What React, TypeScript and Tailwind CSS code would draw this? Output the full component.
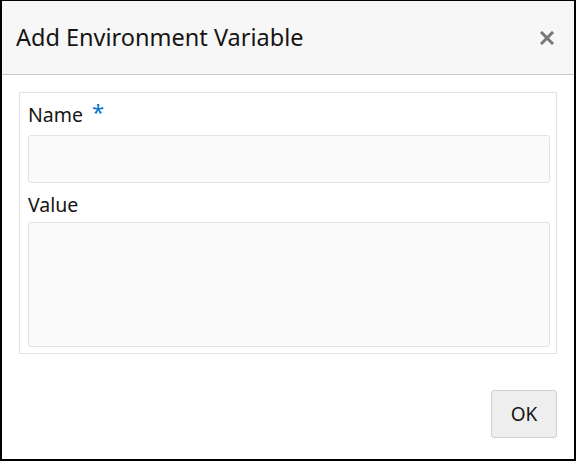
import React, { useState } from 'react';

const App = () => {
  const [name, setName] = useState("");
  const [value, setValue] = useState("");

  return (
    <div
      className="w-[576px] h-[461px] flex flex-col bg-white border border-black border-l-2 border-r-2 border-b-2 overflow-hidden"
      style={{ fontFamily: '"Noto Sans", "Open Sans", sans-serif' }}
    >
      {/* header */}
      <div className="h-[74px] shrink-0 flex items-center justify-between bg-[#f7f7f7] border-b border-[#c8c8c8] pl-[14px] pr-[20px]">
        <h2 className="text-[23.5px] text-[#161513] font-normal leading-none">Add Environment Variable</h2>
        <button className="text-[#777777] hover:text-[#555]" aria-label="Close">
          <svg width="14" height="14" viewBox="0 0 14 14">
            <path d="M2 2 L12 12 M12 2 L2 12" stroke="currentColor" strokeWidth="3" strokeLinecap="square" />
          </svg>
        </button>
      </div>

      {/* form */}
      <div className="flex-1 flex flex-col pt-[17px] pl-[17px] pr-[17px]">
        <div className="border border-[#e3e3e3] pl-[8px] pr-[6px] pt-[8px] pb-[6px]">
          <label htmlFor="env-name" className="flex items-start h-[34px] text-[19.5px] leading-[28px] text-[#161513]">
            Name
            <span className="ml-[9px] text-[#0572ce] text-[22px] leading-[22px] mt-[-1px]">*</span>
          </label>
          <input
            id="env-name"
            value={name}
            onChange={(e) => setName(e.target.value)}
            className="block w-full h-[48px] bg-[#fafafa] border border-[#e3e3e3] rounded-[3px] px-2 outline-none"
          />
          <label htmlFor="env-value" className="block mt-[8px] h-[31px] text-[19.5px] leading-[28px] text-[#161513]">
            Value
          </label>
          <textarea
            id="env-value"
            value={value}
            onChange={(e) => setValue(e.target.value)}
            className="block w-full h-[125px] bg-[#fafafa] border border-[#e3e3e3] rounded-[3px] px-2 py-1 resize-none outline-none"
          />
        </div>

        <div className="flex justify-end mt-[36px]">
          <button className="w-[66px] h-[48px] bg-[#eeeeee] border border-[#d0d0d0] rounded-[3px] text-[19px] text-[#161513] hover:bg-[#e4e4e4]">
            OK
          </button>
        </div>
      </div>
    </div>
  );
};

export default App;
